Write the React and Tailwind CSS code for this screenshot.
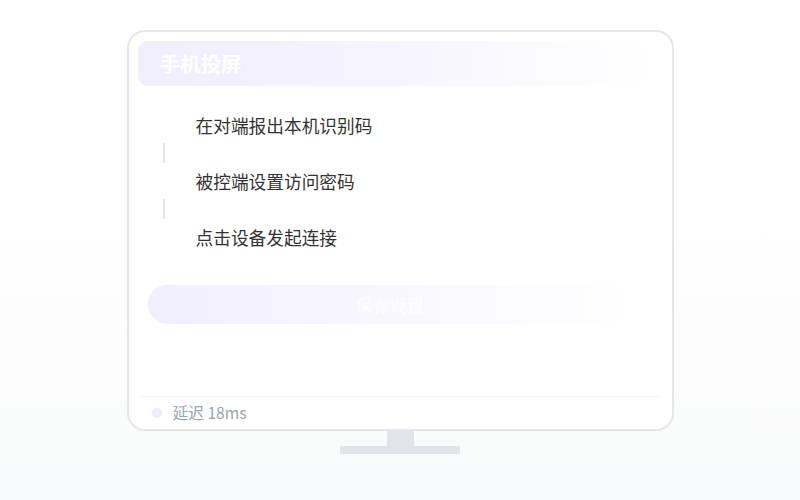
export default function App() {
  const steps = ["在对端报出本机识别码", "被控端设置访问密码", "点击设备发起连接"];
  return (
    <div
      className="w-[800px] h-[500px] flex flex-col items-center pt-[30px] bg-gradient-to-b from-white from-45% to-[#f8f9fa]"
      style={{ fontFamily: '"Noto Sans CJK SC", "Noto Sans", sans-serif' }}
    >
      <div className="w-[547px] h-[401px] border-2 border-[#e4e6ea] rounded-[18px] bg-white px-[9px] pt-[9px] flex flex-col">
        <div className="h-[45px] w-[512px] rounded-[10px] bg-gradient-to-r from-[#f1eefe] via-[#f6f4fe] to-white/0 flex items-center pl-[22px]">
          <span className="text-white text-[20.5px] font-bold leading-none">手机投屏</span>
        </div>
        <div className="mt-[21px] flex flex-col">
          {steps.map((s, i) => (
            <div key={s} className="flex flex-col">
              {i > 0 && <div className="ml-[25px] w-[2px] h-[20px] bg-[#e4e6ec]" />}
              <div className="h-[36px] flex items-center pl-[58px] text-[17.7px] text-[#333333]">{s}</div>
            </div>
          ))}
        </div>
        <div className="mt-[30px] ml-[10px] w-[484px] h-[39px] rounded-full bg-gradient-to-r from-[#f1eefe] via-[#f8f7fe] to-white/0 flex items-center justify-center">
          <span className="text-white text-[17px]" style={{ fontFamily: '"Noto Serif CJK SC", serif' }}>保存设置</span>
        </div>
        <div className="flex-1" />
        <div className="mx-[2px] h-px bg-[#eef0f4]" />
        <div className="h-[32px] flex items-center pl-[14px] gap-[11px]">
          <div className="w-[10px] h-[10px] rounded-full bg-[#efebfd]" />
          <span className="text-[15.7px] text-[#9ca3af]">延迟 18ms</span>
        </div>
      </div>
      <div className="w-[27px] h-[15px] bg-[#e1e4e8]" />
      <div className="w-[120px] h-[8px] bg-[#e1e4e8]" />
    </div>
  );
}
